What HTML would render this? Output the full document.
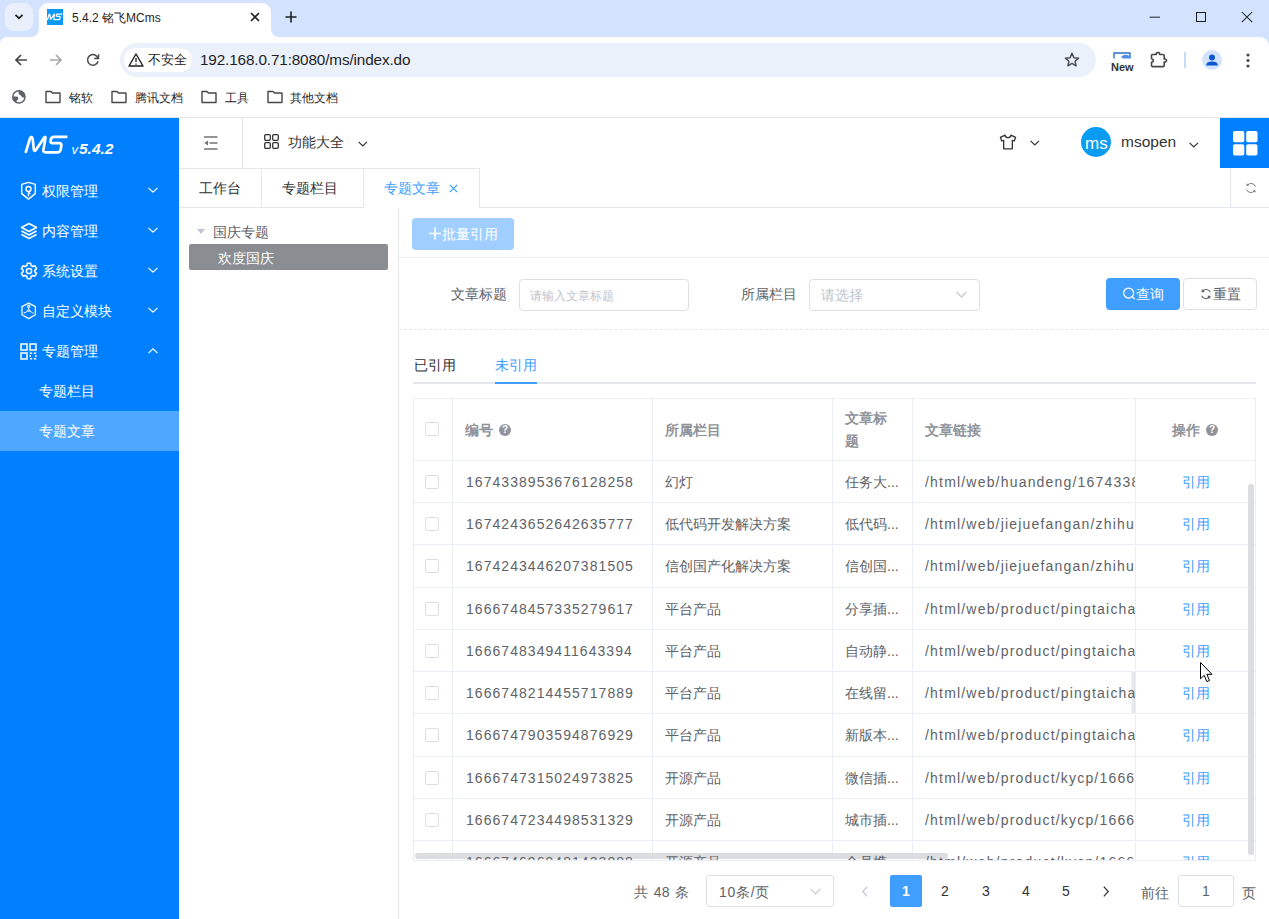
<!DOCTYPE html>
<html><head><meta charset="utf-8">
<style>
*{box-sizing:border-box}
html,body{margin:0;padding:0}
body{width:1269px;height:919px;overflow:hidden;position:relative;background:#fff;font-family:"Liberation Sans",sans-serif;color:#606266}
.a{position:absolute}
.t{position:absolute;white-space:nowrap;line-height:1}
svg{position:absolute;overflow:visible}
/* chrome */
#strip{left:0;top:0;width:1269px;height:46px;background:#d3e3fd}
#toolbar{left:0;top:37px;width:1269px;height:80px;background:#fff}
#bm{left:0;top:117px;width:1269px;height:1px;background:#e3e6ea}
/* sidebar */
#side{left:0;top:118px;width:179px;height:801px;background:#0080ff}
.mi{position:absolute;left:42px;color:#fff;font-size:14px;font-weight:500;line-height:1;white-space:nowrap}
/* header */
.line{position:absolute;background:#e6e6e6}
</style></head><body>

<!-- ============ BROWSER CHROME ============ -->
<div id="strip" class="a"></div>
<!-- active tab -->
<div class="a" style="left:39px;top:3px;width:232px;height:40px;background:#fff;border-radius:9px 9px 0 0"></div>
<div class="a" style="left:31px;top:29px;width:8px;height:8px;background:#fff"></div>
<div class="a" style="left:31px;top:29px;width:8px;height:8px;background:#d3e3fd;border-radius:0 0 8px 0"></div>
<div class="a" style="left:271px;top:29px;width:8px;height:8px;background:#fff"></div>
<div class="a" style="left:271px;top:29px;width:8px;height:8px;background:#d3e3fd;border-radius:0 0 0 8px"></div>
<div class="a" style="left:5px;top:3px;width:28px;height:28px;border-radius:9px;background:#eaf0fb"></div>
<svg style="left:14px;top:13px" width="10" height="8" viewBox="0 0 10 8"><path d="M1.5 1.8 L5 5.3 L8.5 1.8" fill="none" stroke="#1f1f1f" stroke-width="1.8"/></svg>
<!-- favicon -->
<div class="a" style="left:47px;top:9px;width:16px;height:16px;background:#0a99f5"></div>
<svg style="left:0;top:0" width="70" height="30" viewBox="0 0 70 30"><g transform="translate(38.27,-34.73) scale(0.357)"><path d="M25.6 152.8 L29.9 138.6 Q31.4 134.8 32.7 138.8 L33.8 149.4 Q34.3 152.2 36.2 149.6 L43.6 138.4 Q45.8 135.4 45.4 138.6 L43.4 149.8 Q42.9 152.4 45.6 152.4 L57.4 152.4 Q60 152.4 60.6 149.8 L61.3 146 Q61.8 143.2 59.2 143.2 L52.6 143.2 Q50.2 143.2 50.6 140.8 L50.8 139.4 Q51.3 136.8 54 136.8 L67.4 136.8" fill="none" stroke="#fff" stroke-width="3.4" stroke-linejoin="round"/></g></svg>
<div class="t" style="left:72px;top:12px;font-size:12px;color:#1f1f1f">5.4.2 铭飞MCms</div>
<svg style="left:250px;top:12px" width="10" height="10" viewBox="0 0 10 10"><path d="M1 1L9 9M9 1L1 9" stroke="#1f1f1f" stroke-width="1.6"/></svg>
<svg style="left:285px;top:11px" width="12" height="12" viewBox="0 0 12 12"><path d="M6 0.5V11.5M0.5 6H11.5" stroke="#1f1f1f" stroke-width="1.6"/></svg>
<!-- window controls -->
<svg style="left:1149px;top:16px" width="12" height="2" viewBox="0 0 12 2"><path d="M0.6 1.2H11" stroke="#1f1f1f" stroke-width="1"/></svg>
<div class="a" style="left:1196px;top:12px;width:10px;height:10px;border:1px solid #1f1f1f"></div>
<svg style="left:1241px;top:11px" width="12" height="12" viewBox="0 0 12 12"><path d="M0.8 1L11.2 11.2M11.2 1L0.8 11.2" stroke="#1f1f1f" stroke-width="1.05"/></svg>
<!-- toolbar -->
<div id="toolbar" class="a" style="border-radius:7px 9px 0 0"></div>
<svg style="left:13px;top:52px" width="16" height="16" viewBox="0 0 16 16"><path d="M14 8H3M8 3L3 8L8 13" fill="none" stroke="#474747" stroke-width="1.7"/></svg>
<svg style="left:48px;top:52px" width="16" height="16" viewBox="0 0 16 16"><path d="M2 8H13M8 3L13 8L8 13" fill="none" stroke="#a8a8a8" stroke-width="1.7"/></svg>
<svg style="left:85px;top:52px" width="16" height="16" viewBox="0 0 16 16"><path d="M13.02 9.27A5.3 5.3 0 1 1 10.94 3.56L13.3 6.2" fill="none" stroke="#474747" stroke-width="1.5"/><path d="M13.5 2.2V6.4H9.2" fill="none" stroke="#474747" stroke-width="1.5"/></svg>
<div class="a" style="left:120px;top:43px;width:976px;height:34px;border-radius:17px;background:#eaf1fb"></div>
<div class="a" style="left:124px;top:48px;width:68px;height:24px;border-radius:12px;background:#fff"></div>
<svg style="left:128px;top:53px" width="16" height="14" viewBox="0 0 16 14"><path d="M8 1L15 13H1Z" fill="none" stroke="#1f1f1f" stroke-width="1.4" stroke-linejoin="round"/><path d="M8 5V9M8 10.5V11.8" stroke="#1f1f1f" stroke-width="1.3"/></svg>
<div class="t" style="left:148px;top:53px;font-size:13px;color:#1f1f1f">不安全</div>
<div class="t" style="left:200px;top:52px;font-size:15.3px;color:#1f1f1f;letter-spacing:-0.14px">192.168.0.71:8080/ms/index.do</div>
<svg style="left:1064px;top:52px" width="16" height="16" viewBox="0 0 16 16"><path d="M8 1.3L9.9 5.7L14.6 6.1L11 9.2L12.1 13.8L8 11.4L3.9 13.8L5 9.2L1.4 6.1L6.1 5.7Z" fill="none" stroke="#474747" stroke-width="1.4" stroke-linejoin="round"/></svg>
<!-- New icon -->
<svg style="left:1113px;top:52px" width="18" height="8" viewBox="0 0 18 8"><path d="M1 6.5V1H17V6.5" fill="none" stroke="#2c6fc9" stroke-width="1.4"/><path d="M8 5C11 2 14 2.5 16.5 4L16.5 6.5H10Z" fill="#4a8fe0"/></svg>
<div class="t" style="left:1111px;top:62px;font-size:11px;font-weight:bold;color:#333">New</div>
<!-- puzzle -->
<svg style="left:1150px;top:51px" width="18" height="17" viewBox="0 0 18 17"><path d="M2.5 3.5H6.2V2.6Q6.2 1.6 7.2 1.6H8.6Q9.6 1.6 9.6 2.6V3.5H13.2Q14.2 3.5 14.2 4.5V8H15.6L16.6 9.5L15.6 11H14.2V14.6Q14.2 15.6 13.2 15.6H2.5Q1.5 15.6 1.5 14.6V11.2Q3.4 11 3.4 9.5T1.5 7.8V4.5Q1.5 3.5 2.5 3.5Z" fill="none" stroke="#474747" stroke-width="1.6" stroke-linejoin="round"/></svg>
<div class="a" style="left:1184px;top:52px;width:2px;height:16px;background:#c7dcfb"></div>
<div class="a" style="left:1202px;top:50px;width:20px;height:20px;border-radius:10px;background:#d3e3fd"></div>
<svg style="left:1205px;top:53px" width="14" height="14" viewBox="0 0 14 14"><circle cx="7" cy="4.4" r="3" fill="#0b57d0"/><path d="M1.2 12.4C1.2 9.2 4.2 8.4 7 8.4S12.8 9.2 12.8 12.4Z" fill="#0b57d0"/></svg>
<svg style="left:1246px;top:53px" width="4" height="15" viewBox="0 0 4 15"><circle cx="2" cy="2" r="1.6" fill="#474747"/><circle cx="2" cy="7.5" r="1.6" fill="#474747"/><circle cx="2" cy="13" r="1.6" fill="#474747"/></svg>
<!-- bookmarks -->
<svg style="left:11px;top:89px" width="16" height="16" viewBox="0 0 16 16"><circle cx="7.9" cy="7.9" r="6.1" fill="none" stroke="#5f6368" stroke-width="1.5"/><path d="M7.6 1.6A6.3 6.3 0 0 1 14.2 8.4L11.6 8.4Q10.8 8.4 10.4 7.2Q9.9 5.9 8.6 5.8Q7.6 5.7 7.6 4.6Z" fill="#5f6368"/><path d="M1.6 7.6L5.6 7.6Q7.2 7.6 7.4 9.2Q7.5 10.4 6.4 11Q5.6 11.6 5.6 12.6L5.6 14A6.3 6.3 0 0 1 1.6 7.6Z" fill="#5f6368"/></svg>
<svg style="left:45px;top:90px" width="16" height="14" viewBox="0 0 16 14"><path d="M1 1.5H6L7.5 3H15V12.5H1Z" fill="none" stroke="#474747" stroke-width="1.4" stroke-linejoin="round"/></svg>
<div class="t" style="left:69px;top:92px;font-size:12px;color:#1f1f1f">铭软</div>
<svg style="left:111px;top:90px" width="16" height="14" viewBox="0 0 16 14"><path d="M1 1.5H6L7.5 3H15V12.5H1Z" fill="none" stroke="#474747" stroke-width="1.4" stroke-linejoin="round"/></svg>
<div class="t" style="left:135px;top:92px;font-size:12px;color:#1f1f1f">腾讯文档</div>
<svg style="left:201px;top:90px" width="16" height="14" viewBox="0 0 16 14"><path d="M1 1.5H6L7.5 3H15V12.5H1Z" fill="none" stroke="#474747" stroke-width="1.4" stroke-linejoin="round"/></svg>
<div class="t" style="left:225px;top:92px;font-size:12px;color:#1f1f1f">工具</div>
<svg style="left:267px;top:90px" width="16" height="14" viewBox="0 0 16 14"><path d="M1 1.5H6L7.5 3H15V12.5H1Z" fill="none" stroke="#474747" stroke-width="1.4" stroke-linejoin="round"/></svg>
<div class="t" style="left:290px;top:92px;font-size:12px;color:#1f1f1f">其他文档</div>
<div id="bm" class="a"></div>

<!-- ============ SIDEBAR ============ -->
<div id="side" class="a"></div>
<!-- logo -->
<svg style="left:0;top:0" width="120" height="160" viewBox="0 0 120 160">
 <path d="M25.6 152.8 L29.9 138.6 Q31.4 134.8 32.7 138.8 L33.8 149.4 Q34.3 152.2 36.2 149.6 L43.6 138.4 Q45.8 135.4 45.4 138.6 L43.4 149.8 Q42.9 152.4 45.6 152.4 L57.4 152.4 Q60 152.4 60.6 149.8 L61.3 146 Q61.8 143.2 59.2 143.2 L52.6 143.2 Q50.2 143.2 50.6 140.8 L50.8 139.4 Q51.3 136.8 54 136.8 L67.4 136.8" fill="none" stroke="#fff" stroke-width="2.7" stroke-linejoin="round"/>
 <text x="71.5" y="153.6" font-family="Liberation Sans" font-size="13" font-style="italic" fill="#fff">v</text>
 <text x="79" y="153.6" font-family="Liberation Sans" font-size="15.5" font-weight="bold" font-style="italic" fill="#fff">5.4.2</text>
</svg>
<!-- menu 1 shield -->
<svg style="left:20px;top:181px" width="18" height="19" viewBox="0 0 18 19"><path d="M1.7 3.4L8.5 1.3L15.3 3.4V12.6L8.5 18.1L1.7 12.6Z" fill="none" stroke="#fff" stroke-width="1.4" stroke-linejoin="round"/><circle cx="8.5" cy="8" r="2.5" fill="none" stroke="#fff" stroke-width="1.4"/><path d="M8.5 10.5V15.3M8.5 12.2H10.3" stroke="#fff" stroke-width="1.4"/></svg>
<div class="mi" style="top:184px">权限管理</div>
<!-- menu 2 layers -->
<svg style="left:20px;top:222px" width="18" height="18" viewBox="0 0 18 18"><path d="M9 1.5L16.5 5.5L9 9.5L1.5 5.5Z" fill="none" stroke="#fff" stroke-width="1.5" stroke-linejoin="round"/><path d="M1.5 9L9 13L16.5 9M1.5 12.5L9 16.5L16.5 12.5" fill="none" stroke="#fff" stroke-width="1.5" stroke-linejoin="round"/></svg>
<div class="mi" style="top:224px">内容管理</div>
<!-- menu 3 gear -->
<svg style="left:20px;top:262px" width="18" height="18" viewBox="0 0 18 18"><path d="M7.4 1.3H10.6L11.1 3.5L12.8 4.5L15 3.8L16.6 6.6L14.9 8.1V9.9L16.6 11.4L15 14.2L12.8 13.5L11.1 14.5L10.6 16.7H7.4L6.9 14.5L5.2 13.5L3 14.2L1.4 11.4L3.1 9.9V8.1L1.4 6.6L3 3.8L5.2 4.5L6.9 3.5Z" fill="none" stroke="#fff" stroke-width="1.5" stroke-linejoin="round"/><circle cx="9" cy="9" r="2.6" fill="none" stroke="#fff" stroke-width="1.5"/></svg>
<div class="mi" style="top:264px">系统设置</div>
<!-- menu 4 hexagon -->
<svg style="left:20px;top:302px" width="18" height="18" viewBox="0 0 18 18"><path d="M8.7 1L15.4 4.6V12.7L8.7 16.6L2 12.7V4.6Z" fill="none" stroke="#fff" stroke-width="1.25" stroke-linejoin="round"/><circle cx="8.7" cy="4.3" r="1.2" fill="none" stroke="#fff" stroke-width="1.1"/><path d="M8.7 5.5V7.8M3.6 10.9H5L8.7 7.8L12.4 10.9H13.8" fill="none" stroke="#fff" stroke-width="1" stroke-linejoin="round"/><circle cx="8.7" cy="8.6" r="1" fill="none" stroke="#fff" stroke-width="1"/></svg>
<div class="mi" style="top:304px">自定义模块</div>
<!-- menu 5 qr -->
<svg style="left:20px;top:343px" width="17" height="17" viewBox="0 0 17 17"><rect x="1" y="1" width="6" height="6" fill="none" stroke="#fff" stroke-width="1.5"/><rect x="10" y="1" width="6" height="6" fill="none" stroke="#fff" stroke-width="1.5"/><rect x="1" y="10" width="6" height="6" fill="none" stroke="#fff" stroke-width="1.5"/><rect x="10.2" y="10.2" width="5.6" height="5.6" fill="none" stroke="#fff" stroke-width="1.4" stroke-dasharray="2 1.7"/></svg>
<div class="mi" style="top:344px">专题管理</div>
<!-- chevrons -->
<svg style="left:148px;top:187px" width="10" height="6" viewBox="0 0 10 6"><path d="M0.5 0.8L5 5.2L9.5 0.8" fill="none" stroke="#fff" stroke-width="1.1"/></svg>
<svg style="left:148px;top:227px" width="10" height="6" viewBox="0 0 10 6"><path d="M0.5 0.8L5 5.2L9.5 0.8" fill="none" stroke="#fff" stroke-width="1.1"/></svg>
<svg style="left:148px;top:267px" width="10" height="6" viewBox="0 0 10 6"><path d="M0.5 0.8L5 5.2L9.5 0.8" fill="none" stroke="#fff" stroke-width="1.1"/></svg>
<svg style="left:148px;top:307px" width="10" height="6" viewBox="0 0 10 6"><path d="M0.5 0.8L5 5.2L9.5 0.8" fill="none" stroke="#fff" stroke-width="1.1"/></svg>
<svg style="left:148px;top:348px" width="10" height="6" viewBox="0 0 10 6"><path d="M0.5 5.2L5 0.8L9.5 5.2" fill="none" stroke="#fff" stroke-width="1.1"/></svg>
<!-- submenu -->
<div class="mi" style="left:39px;top:384px">专题栏目</div>
<div class="a" style="left:0;top:411px;width:179px;height:40px;background:#4fa7ff"></div>
<div class="mi" style="left:39px;top:424px">专题文章</div>


<!-- ============ HEADER ============ -->
<!-- header lines -->
<div class="line" style="left:179px;top:168px;width:301px;height:1px;background:#e4e7ed"></div>
<div class="line" style="left:242px;top:118px;width:1px;height:50px;background:#e6e6e6"></div>
<svg style="left:204px;top:136px" width="14" height="14" viewBox="0 0 14 14"><path d="M0 1H13.5M5.5 7H13.5M0 13H13.5" stroke="#737373" stroke-width="1.6"/><path d="M0.3 7L4 4.6V9.4Z" fill="#737373"/></svg>
<svg style="left:264px;top:134px" width="15" height="15" viewBox="0 0 15 15"><rect x="0.7" y="0.7" width="5.6" height="5.6" rx="1.2" fill="none" stroke="#333" stroke-width="1.3"/><rect x="8.7" y="0.7" width="5.6" height="5.6" rx="1.2" fill="none" stroke="#333" stroke-width="1.3"/><rect x="0.7" y="8.7" width="5.6" height="5.6" rx="1.2" fill="none" stroke="#333" stroke-width="1.3"/><rect x="8.7" y="8.7" width="5.6" height="5.6" rx="1.2" fill="none" stroke="#333" stroke-width="1.3"/></svg>
<div class="t" style="left:288px;top:135px;font-size:14px;color:#333">功能大全</div>
<svg style="left:358px;top:141px" width="10" height="6" viewBox="0 0 10 6"><path d="M0.6 0.8L4.8 5L9 0.8" fill="none" stroke="#333" stroke-width="1.2"/></svg>
<!-- tshirt -->
<svg style="left:999px;top:134px" width="18" height="16" viewBox="0 0 18 16"><path d="M6 1.2C6.5 2.8 7.5 3.6 9 3.6S11.5 2.8 12 1.2L16.6 3.4L15.2 7L13.3 6.3V14.8H4.7V6.3L2.8 7L1.4 3.4Z" fill="none" stroke="#333" stroke-width="1.3" stroke-linejoin="round"/></svg>
<svg style="left:1030px;top:140px" width="10" height="6" viewBox="0 0 10 6"><path d="M0.6 0.8L4.8 5L9 0.8" fill="none" stroke="#333" stroke-width="1.2"/></svg>
<!-- avatar -->
<div class="a" style="left:1081px;top:127px;width:30px;height:30px;border-radius:15px;background:#0a9bf3"></div>
<div class="t" style="left:1085px;top:135px;font-size:17px;color:#fff">ms</div>
<div class="t" style="left:1121px;top:134px;font-size:15.5px;color:#333">msopen</div>
<svg style="left:1189px;top:142px" width="10" height="6" viewBox="0 0 10 6"><path d="M0.6 0.8L4.8 5L9 0.8" fill="none" stroke="#333" stroke-width="1.2"/></svg>
<!-- blue square -->
<div class="a" style="left:1220px;top:118px;width:49px;height:50px;background:#0080ff"></div>
<svg style="left:1233px;top:131px" width="25" height="25" viewBox="0 0 25 25"><rect x="0" y="0" width="11.3" height="11.3" rx="1.8" fill="#fff"/><rect x="13.2" y="0" width="11.3" height="11.3" rx="1.8" fill="#fff"/><rect x="0" y="13.2" width="11.3" height="11.3" rx="1.8" fill="#fff"/><rect x="13.2" y="13.2" width="11.3" height="11.3" rx="1.8" fill="#fff"/></svg>
<!-- tabs row -->
<div class="line" style="left:179px;top:207px;width:184px;height:1px;background:#e4e7ed"></div>
<div class="line" style="left:479px;top:207px;width:790px;height:1px;background:#e4e7ed"></div>
<div class="line" style="left:261px;top:169px;width:1px;height:38px;background:#e4e7ed"></div>
<div class="line" style="left:363px;top:169px;width:1px;height:39px;background:#e4e7ed"></div>
<div class="line" style="left:479px;top:169px;width:1px;height:39px;background:#e4e7ed"></div>
<div class="t" style="left:199px;top:181px;font-size:14px;color:#303133">工作台</div>
<div class="t" style="left:282px;top:181px;font-size:14px;color:#303133">专题栏目</div>
<div class="t" style="left:384px;top:181px;font-size:14px;color:#409eff">专题文章</div>
<svg style="left:449px;top:184px" width="9" height="9" viewBox="0 0 9 9"><path d="M0.8 0.8L8.2 8.2M8.2 0.8L0.8 8.2" stroke="#409eff" stroke-width="1.2"/></svg>
<div class="line" style="left:1230px;top:168px;width:1px;height:39px;background:#e4e7ed"></div>
<svg style="left:1245px;top:182px" width="12" height="12" viewBox="0 0 12 12"><path d="M10.6 4.6A4.8 4.8 0 0 0 2.4 3.2M1.4 7.4A4.8 4.8 0 0 0 9.6 8.8" fill="none" stroke="#7a7d84" stroke-width="1"/><path d="M1.6 1.8L2.4 3.4L4 2.6M10.4 10.2L9.6 8.6L8 9.4" fill="none" stroke="#7a7d84" stroke-width="1.1"/></svg>


<!-- ============ CONTENT ============ -->
<svg style="left:197px;top:229px" width="8" height="5" viewBox="0 0 8 5"><path d="M0 0H8L4 5Z" fill="#c0c4cc"/></svg>
<div class="t" style="left:213px;top:225px;font-size:14px;color:#606266">国庆专题</div>
<div class="a" style="left:189px;top:244px;width:199px;height:26px;border-radius:2px;background:#8a8d92"></div>
<div class="t" style="left:218px;top:251px;font-size:14px;color:#fff">欢度国庆</div>
<div class="line" style="left:398px;top:208px;width:1px;height:711px;background:#e4e7ed"></div>
<div class="a" style="left:412px;top:218px;width:102px;height:32px;border-radius:4px;background:#a0cfff"></div>
<svg style="left:429px;top:227px" width="12" height="13" viewBox="0 0 12 13"><path d="M6 0.5V12.5M0 6.5H12" stroke="#fff" stroke-width="1.6"/></svg>
<div class="t" style="left:442px;top:227px;font-size:14px;color:#fff">批量引用</div>
<div class="line" style="left:399px;top:257px;width:870px;height:1px;background:#ebeef5"></div>
<div class="t" style="left:451px;top:287px;font-size:14px;color:#606266">文章标题</div>
<div class="a" style="left:519px;top:279px;width:170px;height:32px;border:1px solid #dcdfe6;border-radius:4px;background:#fff"></div>
<div class="t" style="left:530px;top:290px;font-size:12px;color:#c0c4cc">请输入文章标题</div>
<div class="t" style="left:741px;top:287px;font-size:14px;color:#606266">所属栏目</div>
<div class="a" style="left:809px;top:279px;width:171px;height:32px;border:1px solid #dcdfe6;border-radius:4px;background:#fff"></div>
<div class="t" style="left:821px;top:288px;font-size:14px;color:#c0c4cc">请选择</div>
<svg style="left:956px;top:291px" width="11" height="7" viewBox="0 0 11 7"><path d="M0.6 0.8L5.5 5.8L10.4 0.8" fill="none" stroke="#c0c4cc" stroke-width="1.2"/></svg>
<div class="a" style="left:1106px;top:278px;width:74px;height:32px;border-radius:4px;background:#409eff"></div>
<svg style="left:1123px;top:287px" width="14" height="14" viewBox="0 0 14 14"><circle cx="5.6" cy="6" r="5" fill="none" stroke="#fff" stroke-width="1.25"/><path d="M9.2 9.6L11.6 12" stroke="#fff" stroke-width="1.25"/></svg>
<div class="t" style="left:1136px;top:287px;font-size:14px;color:#fff">查询</div>
<div class="a" style="left:1183px;top:278px;width:74px;height:32px;border:1px solid #dcdfe6;border-radius:4px;background:#fff"></div>
<svg style="left:1200px;top:288px" width="12" height="12" viewBox="0 0 12 12"><path d="M10.4 4.2A4.8 4.8 0 0 0 2.2 3.4M1.6 7.8A4.8 4.8 0 0 0 9.8 8.6" fill="none" stroke="#606266" stroke-width="1.1"/><path d="M2.2 1.4V3.6H4.2M9.8 10.6V8.4H7.8" fill="none" stroke="#606266" stroke-width="1.1"/></svg>
<div class="t" style="left:1213px;top:287px;font-size:14px;color:#606266">重置</div>
<div class="a" style="left:399px;top:329px;width:870px;height:0;border-top:1px dashed #e4e7ed"></div>
<div class="t" style="left:414px;top:358px;font-size:14px;color:#303133">已引用</div>
<div class="t" style="left:495px;top:358px;font-size:14px;color:#409eff">未引用</div>
<div class="a" style="left:413px;top:382px;width:843px;height:2px;background:#e4e7ed"></div>
<div class="a" style="left:495px;top:382px;width:42px;height:2px;background:#409eff"></div>
<div class="a" style="left:413px;top:398px;width:843px;height:463px;border:1px solid #ebeef5;overflow:hidden;background:#fff">
<div class="a" style="left:38px;top:-1px;width:1px;height:463px;background:#ebeef5"></div>
<div class="a" style="left:238px;top:-1px;width:1px;height:463px;background:#ebeef5"></div>
<div class="a" style="left:418px;top:-1px;width:1px;height:463px;background:#ebeef5"></div>
<div class="a" style="left:498px;top:-1px;width:1px;height:463px;background:#ebeef5"></div>
<div class="a" style="left:721px;top:-1px;width:1px;height:463px;background:#ebeef5"></div>
<div class="a" style="left:-1px;top:61px;width:843px;height:1px;background:#ebeef5"></div>
<div class="a" style="left:-1px;top:103px;width:843px;height:1px;background:#ebeef5"></div>
<div class="a" style="left:-1px;top:145px;width:843px;height:1px;background:#ebeef5"></div>
<div class="a" style="left:-1px;top:188px;width:843px;height:1px;background:#ebeef5"></div>
<div class="a" style="left:-1px;top:230px;width:843px;height:1px;background:#ebeef5"></div>
<div class="a" style="left:-1px;top:272px;width:843px;height:1px;background:#ebeef5"></div>
<div class="a" style="left:-1px;top:314px;width:843px;height:1px;background:#ebeef5"></div>
<div class="a" style="left:-1px;top:357px;width:843px;height:1px;background:#ebeef5"></div>
<div class="a" style="left:-1px;top:399px;width:843px;height:1px;background:#ebeef5"></div>
<div class="a" style="left:-1px;top:441px;width:843px;height:1px;background:#ebeef5"></div>
<div class="a" style="left:-1px;top:483px;width:843px;height:1px;background:#ebeef5"></div>
<div class="a" style="left:834px;top:85px;width:6px;height:371px;border-radius:3px;background:#dcdde0"></div>
<div class="a" style="left:1px;top:454px;width:533px;height:6px;border-radius:3px;background:#dcdde0"></div>
<div class="a" style="left:717px;top:273px;width:4px;height:41px;background:linear-gradient(90deg,#eef1f8,#dfe2e8)"></div>
<div class="a" style="left:11px;top:23px;width:14px;height:14px;border:1px solid #dcdfe6;border-radius:2px"></div>
<div class="t" style="left:51px;top:24px;font-size:14px;font-weight:bold;color:#909399">编号</div>
<div class="a" style="left:85px;top:25px;width:12px;height:12px;border-radius:6px;background:#909399;color:#fff;font-size:10px;font-weight:bold;line-height:12px;text-align:center">?</div>
<div class="t" style="left:251px;top:24px;font-size:14px;font-weight:bold;color:#909399">所属栏目</div>
<div class="t" style="left:431px;top:12px;font-size:14px;font-weight:bold;color:#909399">文章标</div>
<div class="t" style="left:431px;top:35px;font-size:14px;font-weight:bold;color:#909399">题</div>
<div class="t" style="left:511px;top:24px;font-size:14px;font-weight:bold;color:#909399">文章链接</div>
<div class="t" style="left:758px;top:24px;font-size:14px;font-weight:bold;color:#909399">操作</div>
<div class="a" style="left:792px;top:25px;width:12px;height:12px;border-radius:6px;background:#909399;color:#fff;font-size:10px;font-weight:bold;line-height:12px;text-align:center">?</div>
<div class="a" style="left:11px;top:76px;width:14px;height:14px;border:1px solid #dcdfe6;border-radius:2px"></div>
<div class="t" style="left:52px;top:76px;font-size:14px;color:#606266;letter-spacing:1.05px">1674338953676128258</div>
<div class="t" style="left:251px;top:76px;font-size:14px;color:#606266">幻灯</div>
<div class="t" style="left:431px;top:76px;font-size:14px;color:#606266">任务大...</div>
<div class="a" style="left:511px;top:76px;width:210px;height:20px;overflow:hidden"><div class="t" style="left:0;top:0;font-size:14px;color:#606266;letter-spacing:1.19px">/html/web/huandeng/1674338953676128258.html</div></div>
<div class="t" style="left:768px;top:76px;font-size:14px;color:#409eff">引用</div>
<div class="a" style="left:11px;top:118px;width:14px;height:14px;border:1px solid #dcdfe6;border-radius:2px"></div>
<div class="t" style="left:52px;top:118px;font-size:14px;color:#606266;letter-spacing:1.05px">1674243652642635777</div>
<div class="t" style="left:251px;top:118px;font-size:14px;color:#606266">低代码开发解决方案</div>
<div class="t" style="left:431px;top:118px;font-size:14px;color:#606266">低代码...</div>
<div class="a" style="left:511px;top:118px;width:210px;height:20px;overflow:hidden"><div class="t" style="left:0;top:0;font-size:14px;color:#606266;letter-spacing:1.19px">/html/web/jiejuefangan/zhihuixiaoyuan</div></div>
<div class="t" style="left:768px;top:118px;font-size:14px;color:#409eff">引用</div>
<div class="a" style="left:11px;top:160px;width:14px;height:14px;border:1px solid #dcdfe6;border-radius:2px"></div>
<div class="t" style="left:52px;top:160px;font-size:14px;color:#606266;letter-spacing:1.05px">1674243446207381505</div>
<div class="t" style="left:251px;top:160px;font-size:14px;color:#606266">信创国产化解决方案</div>
<div class="t" style="left:431px;top:160px;font-size:14px;color:#606266">信创国...</div>
<div class="a" style="left:511px;top:160px;width:210px;height:20px;overflow:hidden"><div class="t" style="left:0;top:0;font-size:14px;color:#606266;letter-spacing:1.19px">/html/web/jiejuefangan/zhihuixiaoyuan</div></div>
<div class="t" style="left:768px;top:160px;font-size:14px;color:#409eff">引用</div>
<div class="a" style="left:11px;top:203px;width:14px;height:14px;border:1px solid #dcdfe6;border-radius:2px"></div>
<div class="t" style="left:52px;top:203px;font-size:14px;color:#606266;letter-spacing:1.05px">1666748457335279617</div>
<div class="t" style="left:251px;top:203px;font-size:14px;color:#606266">平台产品</div>
<div class="t" style="left:431px;top:203px;font-size:14px;color:#606266">分享插...</div>
<div class="a" style="left:511px;top:203px;width:210px;height:20px;overflow:hidden"><div class="t" style="left:0;top:0;font-size:14px;color:#606266;letter-spacing:1.19px">/html/web/product/pingtaichanpin/1666</div></div>
<div class="t" style="left:768px;top:203px;font-size:14px;color:#409eff">引用</div>
<div class="a" style="left:11px;top:245px;width:14px;height:14px;border:1px solid #dcdfe6;border-radius:2px"></div>
<div class="t" style="left:52px;top:245px;font-size:14px;color:#606266;letter-spacing:1.05px">1666748349411643394</div>
<div class="t" style="left:251px;top:245px;font-size:14px;color:#606266">平台产品</div>
<div class="t" style="left:431px;top:245px;font-size:14px;color:#606266">自动静...</div>
<div class="a" style="left:511px;top:245px;width:210px;height:20px;overflow:hidden"><div class="t" style="left:0;top:0;font-size:14px;color:#606266;letter-spacing:1.19px">/html/web/product/pingtaichanpin/1666</div></div>
<div class="t" style="left:768px;top:245px;font-size:14px;color:#409eff">引用</div>
<div class="a" style="left:11px;top:287px;width:14px;height:14px;border:1px solid #dcdfe6;border-radius:2px"></div>
<div class="t" style="left:52px;top:287px;font-size:14px;color:#606266;letter-spacing:1.05px">1666748214455717889</div>
<div class="t" style="left:251px;top:287px;font-size:14px;color:#606266">平台产品</div>
<div class="t" style="left:431px;top:287px;font-size:14px;color:#606266">在线留...</div>
<div class="a" style="left:511px;top:287px;width:210px;height:20px;overflow:hidden"><div class="t" style="left:0;top:0;font-size:14px;color:#606266;letter-spacing:1.19px">/html/web/product/pingtaichanpin/1666</div></div>
<div class="t" style="left:768px;top:287px;font-size:14px;color:#409eff">引用</div>
<div class="a" style="left:11px;top:329px;width:14px;height:14px;border:1px solid #dcdfe6;border-radius:2px"></div>
<div class="t" style="left:52px;top:329px;font-size:14px;color:#606266;letter-spacing:1.05px">1666747903594876929</div>
<div class="t" style="left:251px;top:329px;font-size:14px;color:#606266">平台产品</div>
<div class="t" style="left:431px;top:329px;font-size:14px;color:#606266">新版本...</div>
<div class="a" style="left:511px;top:329px;width:210px;height:20px;overflow:hidden"><div class="t" style="left:0;top:0;font-size:14px;color:#606266;letter-spacing:1.19px">/html/web/product/pingtaichanpin/1666</div></div>
<div class="t" style="left:768px;top:329px;font-size:14px;color:#409eff">引用</div>
<div class="a" style="left:11px;top:372px;width:14px;height:14px;border:1px solid #dcdfe6;border-radius:2px"></div>
<div class="t" style="left:52px;top:372px;font-size:14px;color:#606266;letter-spacing:1.05px">1666747315024973825</div>
<div class="t" style="left:251px;top:372px;font-size:14px;color:#606266">开源产品</div>
<div class="t" style="left:431px;top:372px;font-size:14px;color:#606266">微信插...</div>
<div class="a" style="left:511px;top:372px;width:210px;height:20px;overflow:hidden"><div class="t" style="left:0;top:0;font-size:14px;color:#606266;letter-spacing:1.19px">/html/web/product/kycp/1666747315024973825</div></div>
<div class="t" style="left:768px;top:372px;font-size:14px;color:#409eff">引用</div>
<div class="a" style="left:11px;top:414px;width:14px;height:14px;border:1px solid #dcdfe6;border-radius:2px"></div>
<div class="t" style="left:52px;top:414px;font-size:14px;color:#606266;letter-spacing:1.05px">1666747234498531329</div>
<div class="t" style="left:251px;top:414px;font-size:14px;color:#606266">开源产品</div>
<div class="t" style="left:431px;top:414px;font-size:14px;color:#606266">城市插...</div>
<div class="a" style="left:511px;top:414px;width:210px;height:20px;overflow:hidden"><div class="t" style="left:0;top:0;font-size:14px;color:#606266;letter-spacing:1.19px">/html/web/product/kycp/1666747234498531329</div></div>
<div class="t" style="left:768px;top:414px;font-size:14px;color:#409eff">引用</div>
<div class="a" style="left:11px;top:456px;width:14px;height:14px;border:1px solid #dcdfe6;border-radius:2px"></div>
<div class="t" style="left:52px;top:456px;font-size:14px;color:#606266;letter-spacing:1.05px">1666746969481433088</div>
<div class="t" style="left:251px;top:456px;font-size:14px;color:#606266">开源产品</div>
<div class="t" style="left:431px;top:456px;font-size:14px;color:#606266">全员携...</div>
<div class="a" style="left:511px;top:456px;width:210px;height:20px;overflow:hidden"><div class="t" style="left:0;top:0;font-size:14px;color:#606266;letter-spacing:1.19px">/html/web/product/kycp/1666746969481433088</div></div>
<div class="t" style="left:768px;top:456px;font-size:14px;color:#409eff">引用</div>
<div class="a" style="left:721px;top:-1px;width:1px;height:463px;background:#ebeef5"></div>
</div>
<div class="t" style="left:634px;top:885px;font-size:14px;color:#606266;letter-spacing:0.3px;word-spacing:1.2px">共 48 条</div>
<div class="a" style="left:706px;top:875px;width:128px;height:32px;border:1px solid #dcdfe6;border-radius:3px;background:#fff"></div>
<div class="t" style="left:719px;top:885px;font-size:14px;color:#606266;letter-spacing:0.7px">10条/页</div>
<svg style="left:810px;top:888px" width="11" height="7" viewBox="0 0 11 7"><path d="M0.6 0.8L5.5 5.8L10.4 0.8" fill="none" stroke="#c0c4cc" stroke-width="1.1"/></svg>
<svg style="left:862px;top:886px" width="6" height="11" viewBox="0 0 6 11"><path d="M5.2 0.6L0.8 5.5L5.2 10.4" fill="none" stroke="#c0c4cc" stroke-width="1.2"/></svg>
<div class="a" style="left:890px;top:875px;width:32px;height:32px;border-radius:2px;background:#409eff;color:#fff;font-size:14px;font-weight:bold;line-height:33px;text-align:center">1</div>
<div class="a" style="left:929px;top:875px;width:32px;height:32px;color:#303133;font-size:14px;line-height:33px;text-align:center">2</div>
<div class="a" style="left:970px;top:875px;width:32px;height:32px;color:#303133;font-size:14px;line-height:33px;text-align:center">3</div>
<div class="a" style="left:1010px;top:875px;width:32px;height:32px;color:#303133;font-size:14px;line-height:33px;text-align:center">4</div>
<div class="a" style="left:1050px;top:875px;width:32px;height:32px;color:#303133;font-size:14px;line-height:33px;text-align:center">5</div>
<svg style="left:1103px;top:886px" width="6" height="11" viewBox="0 0 6 11"><path d="M0.8 0.6L5.2 5.5L0.8 10.4" fill="none" stroke="#303133" stroke-width="1.2"/></svg>
<div class="t" style="left:1141px;top:886px;font-size:14px;color:#606266">前往</div>
<div class="a" style="left:1178px;top:875px;width:56px;height:32px;border:1px solid #dcdfe6;border-radius:3px;background:#fff;color:#606266;font-size:14px;line-height:31px;text-align:center">1</div>
<div class="t" style="left:1242px;top:886px;font-size:14px;color:#606266">页</div>
<svg style="left:1200px;top:662px" width="14" height="21" viewBox="0 0 14 21"><path d="M0.5 0.5V16.8L4.2 13.4L6.9 19.6L9.5 18.5L6.9 12.3H12Z" fill="#fff" stroke="#000" stroke-width="1" stroke-linejoin="round"/></svg>
</body></html>
